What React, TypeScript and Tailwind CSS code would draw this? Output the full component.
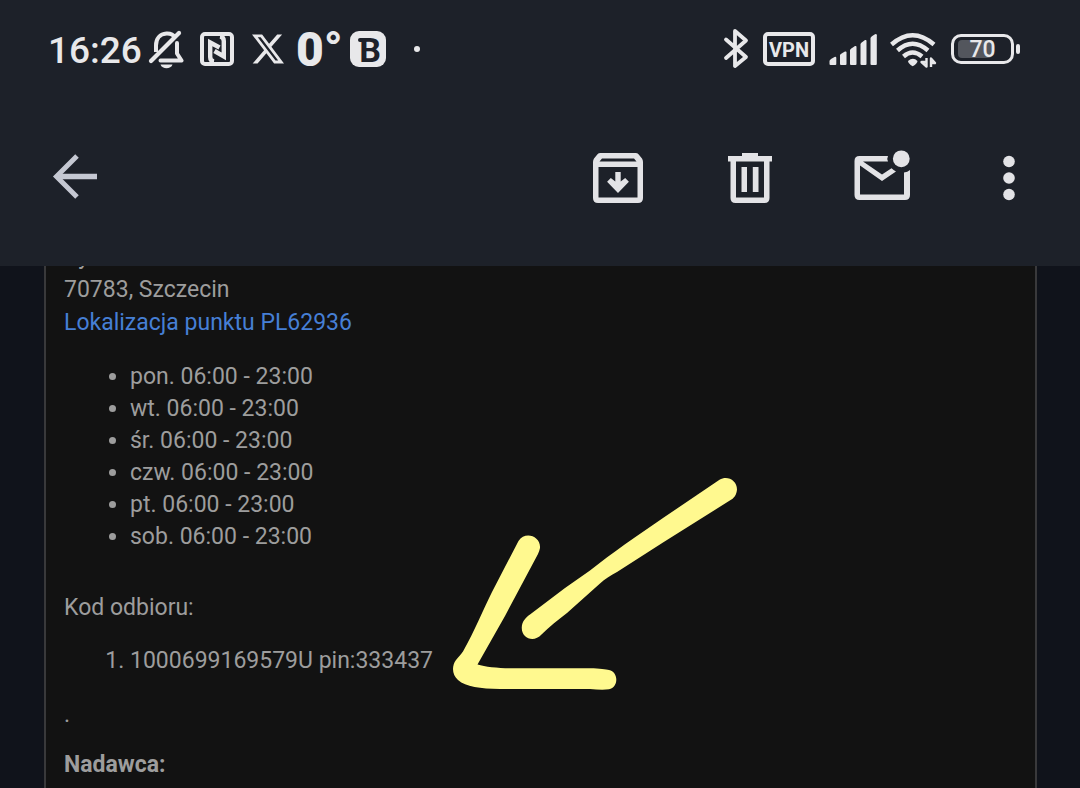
import React from "react";
import { BsTwitterX } from "react-icons/bs";

const hours = [
  "pon. 06:00 - 23:00",
  "wt. 06:00 - 23:00",
  "śr. 06:00 - 23:00",
  "czw. 06:00 - 23:00",
  "pt. 06:00 - 23:00",
  "sob. 06:00 - 23:00",
];

function BellOff() {
  return (
    <svg width="36" height="40" viewBox="148 29 36 40" fill="none" aria-hidden="true">
      <path d="M156 52V45.500c0-7 4-11.500 10.500-12 4-.2 7 1.400 8.500 4" stroke="currentColor" strokeWidth="4" />
      <path d="M177 43v10.500l4.500 7H160.500" stroke="currentColor" strokeWidth="4" strokeLinejoin="round" strokeLinecap="round" />
      <path d="M151 61 179 33" stroke="currentColor" strokeWidth="4.200" strokeLinecap="round" />
      <path d="M160.500 64.500h12c-1.500 5-10.500 5-12 0z" fill="currentColor" />
    </svg>
  );
}

function Nfc() {
  return (
    <svg width="48" height="40" viewBox="192 29 48 40" fill="none" aria-hidden="true">
      <rect x="202" y="34" width="30" height="30" rx="3" stroke="currentColor" strokeWidth="4" />
      <path d="M214 61.500q-3.800-.5-3.800-4.500V42.500L219.500 47.500" stroke="currentColor" strokeWidth="4.400" />
      <path d="M220 36.500q3.800.5 3.800 4.500V56.500L214.500 51" stroke="currentColor" strokeWidth="4.400" />
    </svg>
  );
}

function Bluetooth() {
  return (
    <svg width="26" height="42" viewBox="722 28 26 42" fill="none" aria-hidden="true">
      <path d="M725 39.500 745 57 734 66V31L745 40.500 725 58" stroke="currentColor" strokeWidth="3.800" strokeLinejoin="round" strokeLinecap="round" />
    </svg>
  );
}

function Signal() {
  return (
    <svg width="48" height="34" viewBox="829 32 48 34" fill="currentColor" aria-hidden="true">
      <path d="M829.500 61q0-1.500 5-4 1.800-.6 1.800 1V64q0 1-1 1h-4.800q-1 0-1-1z" />
      <path d="M840 55q0-1 5-3.500 1.500-.5 1.500 1V64q0 1-1 1H841q-1 0-1-1z" />
      <path d="M850 50q0-1 5-4 1.500-.5 1.500 1V64q0 1-1 1H851q-1 0-1-1z" />
      <path d="M860.500 44q0-1 4.500-4 1.500-.5 1.500 1V64q0 1-1 1h-4q-1 0-1-1z" />
      <path d="M870.500 38q0-1 4.500-3.800 1.800-.6 1.800 1V64q0 1-1 1h-4.300q-1 0-1-1z" />
    </svg>
  );
}

function Wifi() {
  return (
    <svg width="48" height="38" viewBox="889 30 48 38" fill="none" aria-hidden="true">
      <path d="M891.500 44.500Q912.500 26 934 44.500" stroke="currentColor" strokeWidth="4.400" />
      <path d="M897.500 50.500Q912.500 37 928 50.500" stroke="currentColor" strokeWidth="4.400" />
      <path d="M903.500 56.500Q912.500 48.500 922 56.500" stroke="currentColor" strokeWidth="4.400" />
      <path d="M908 61q5-4.500 9.500 0 0 2.500-4.800 5.300Q908 63.500 908 61z" fill="currentColor" />
      <path d="M926.500 58v8.500l-5-4.500h5M931 67v-8.500l4 4.500h-4" stroke="currentColor" strokeWidth="2.400" strokeLinejoin="round" />
    </svg>
  );
}

function StatusBar() {
  return (
    <div className="flex h-[98px] items-center justify-between pl-12 pr-[60px] text-[#e8e8ea]">
      <div className="flex items-center gap-2">
        <time className="w-[92px] pt-1 text-[37px] leading-10 font-medium">16:26</time>
        <BellOff />
        <Nfc />
        <span className="flex w-10 justify-center">
          <BsTwitterX className="size-8" aria-label="X" />
        </span>
        <span className="w-[46px] pt-0.5 text-[48px] leading-10 font-black">0°</span>
        <span className="relative flex size-9 items-center justify-center rounded-[9px] bg-[#e8e8ea] pt-0.5 pl-1 text-[34px] leading-9 font-bold text-[#1d2129]">
          B
          <span className="absolute top-[7px] left-2 h-1 w-1.5 rounded-l-sm bg-current" />
        </span>
        <span className="ml-5 size-[6px] rounded-full bg-current" />
      </div>
      <div className="flex items-center gap-[14px]">
        <Bluetooth />
        <span className="flex h-[34px] w-[52px] items-center justify-center rounded-[5px] border-4 border-current pt-0.5 text-[20px] leading-6 font-bold">
          VPN
        </span>
        <Signal />
        <div className="-ml-0.5 flex items-center gap-[14px]">
          <Wifi />
          <div className="flex items-center gap-0.5">
            <div className="relative flex h-[30px] w-[63px] items-center justify-center rounded-[10px] border-[3px] border-current">
              <span className="absolute left-1 h-[18px] w-[34px] rounded-[4px] bg-[#53565d]" />
              <span className="relative pt-0.5 text-[23px] leading-6 font-medium">70</span>
            </div>
            <span className="h-[10px] w-1 rounded-full bg-current" />
          </div>
        </div>
      </div>
    </div>
  );
}

function AppBar() {
  return (
    <nav className="flex h-[168px] items-center justify-between pr-[10px] pb-2 pl-10 text-[#e3e3e6]">
      <button type="button" aria-label="Wstecz" className="flex h-40 items-center px-3 pb-1 text-[#c5c8d2]">
        <svg width="46" height="46" viewBox="52 153 46 46" fill="none" stroke="currentColor" aria-hidden="true">
          <path d="M77 156 56.500 176.500 77 197" strokeWidth="5" />
          <path d="M58 176.500H97" strokeWidth="5.400" />
        </svg>
      </button>
      <div className="flex">
        <button type="button" aria-label="Archiwizuj" className="flex h-40 w-[132px] items-center justify-center">
          <svg width="50" height="50" viewBox="593 153 50 50" fill="currentColor" aria-hidden="true">
            <path fillRule="evenodd" d="M600.500 153h35q2 0 3 1.300l3.500 4.200q1 1.500 1 3.500v36q0 5-5 5h-40q-5 0-5-5v-36q0-2 1-3.500l3.500-4.200q1-1.300 3-1.300zM602 158.500l-2.500 3h37l-2.500-3zM598.500 167v30.500h39V167z" />
            <path d="M615.300 172h5.400v9.500l4.500-3.500 3.700 3.800L618 193l-10.900-11.200 3.700-3.800 4.500 3.500z" />
          </svg>
        </button>
        <button type="button" aria-label="Usuń" className="flex h-40 w-[132px] items-center justify-center">
          <svg width="44" height="50" viewBox="728 153 44 50" fill="currentColor" aria-hidden="true">
            <path fillRule="evenodd" d="M742 153h16v3h14v5.500h-2.500V198q0 5-5 5h-29q-5 0-5-5v-36.500H728V156h14zM736 161.500v36h28v-36z" />
            <path d="M741.500 167h5.500v25h-5.500zM752.800 167h5.700v25h-5.700z" />
          </svg>
        </button>
        <button type="button" aria-label="Oznacz jako nieprzeczytane" className="flex h-40 w-[132px] items-center justify-center">
          <svg width="56" height="56" viewBox="854 150 56 56" fill="currentColor" aria-hidden="true">
            <path d="M888 156q-1.500 3 0 5.500h-25L882 174.500l9.500-6.200q2 2 4.500 3.300L882 181l-22-15.500v29h44v-22q3.500-.5 6-2.500v25q0 5-5 5h-45.500q-5 0-5-5V161q0-5 5-5z" />
            <circle cx="901.300" cy="158.800" r="8.400" />
          </svg>
        </button>
        <button type="button" aria-label="Więcej opcji" className="flex h-40 w-[122px] items-center justify-center">
          <svg width="12" height="46" viewBox="1003 155 12 46" fill="currentColor" aria-hidden="true">
            <circle cx="1009" cy="161.500" r="5.800" />
            <circle cx="1009" cy="178" r="5.800" />
            <circle cx="1009" cy="194.500" r="5.800" />
          </svg>
        </button>
      </div>
    </nav>
  );
}

function ArrowMark() {
  return (
    <svg className="pointer-events-none absolute top-[204px] left-[440px]" width="310" height="230" viewBox="440 470 310 230" fill="#fff98f" aria-hidden="true">
      <path d="M719.500 479.800C727 475 737 480 737 489.500 736.500 494 735 497.500 731 499.800L663 542.500 617 572C610 576 605 579 600 583.500L567 613C558 620 549 627 541.500 634.500 534 643 521 638.500 521.800 627 522 622 525 618 530 614.500L565 588 590 570.500C612 553 638 535 663 518z" />
      <path d="M518.500 541C525 530.500 541 536 540 548 539.500 550 539 552 538 554L505 616 477.500 664.500C485 667 497 668 510 668.300H590C600 668.300 606 669.500 609 670 618.500 672 619 687 609 689.300 604 690 597 689.700 590 689H500C480 688.700 466 687 458 680 452 675 451.500 666 456 660 459 656 461 654.500 463 651.500 475 630 482 612 492 592z" />
    </svg>
  );
}

export default function App() {
  return (
    <div className="flex min-h-screen flex-col bg-[#10131b] font-['Roboto',sans-serif]">
      <header className="bg-[#1d2129]">
        <StatusBar />
        <AppBar />
      </header>
      <main className="relative flex grow flex-col px-[43px] pl-11">
        <article className="grow overflow-hidden border-x-2 border-[#39393b] bg-[#121212] px-[18px] pb-2 text-[23px] leading-8 text-[#9d9d9d]">
          <address className="-mt-[26px] leading-[33px] not-italic">
            Ry
            <br />
            70783, Szczecin
            <br />
            <a href="#punkt" className="text-[#467fd5]">
              Lokalizacja punktu PL62936
            </a>
          </address>
          <ul className="mt-[22px] list-disc pl-[66px]">
            {hours.map((h) => (
              <li key={h}>{h}</li>
            ))}
          </ul>
          <p className="mt-[39px]">Kod odbioru:</p>
          <ol className="mt-[21px] list-decimal pl-[66px]">
            <li>1000699169579U pin:333437</li>
          </ol>
          <p className="mt-[22px]">.</p>
          <p className="mt-[18px] font-bold">Nadawca:</p>
        </article>
        <ArrowMark />
      </main>
    </div>
  );
}
